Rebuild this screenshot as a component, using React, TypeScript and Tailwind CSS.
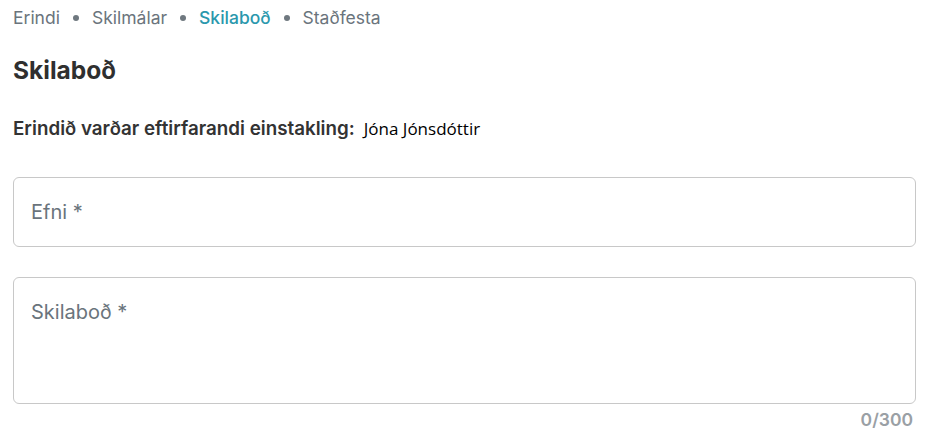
import React from "react";

const Dot = () => <span className="inline-block w-[6px] h-[6px] rounded-full bg-[#6f787f]" />;

export default function App() {
  return (
    <div className="w-[926px] h-[438px] bg-white pl-[13px] pr-[10px] pt-[6px] text-[#333]" style={{ fontFamily: "Inter, 'Noto Sans', sans-serif" }}>
      <nav className="flex items-center gap-[13px] text-[17.5px] leading-[24px] text-[#6a747c]">
        <span>Erindi</span>
        <Dot />
        <span>Skilmálar</span>
        <Dot />
        <span className="text-[#2a98ad] font-medium">Skilaboð</span>
        <Dot />
        <span>Staðfesta</span>
      </nav>
      <h1 className="mt-[26px] text-[24.5px] leading-[28px] font-bold text-[#2f2f2f]">Skilaboð</h1>
      <div className="mt-[33px] flex items-baseline gap-[9px] leading-[24px]">
        <span className="text-[18.8px] font-semibold text-[#333]">Erindið varðar eftirfarandi einstakling:</span>
        <span className="text-[17px] text-black" style={{ fontFamily: "'Open Sans', sans-serif" }}>Jóna Jónsdóttir</span>
      </div>
      <div className="mt-[36px] h-[70px] rounded-[6px] border border-[#c8c8c8] flex items-center px-[17px]">
        <span className="text-[20px] text-[#6a747c]">Efni *</span>
      </div>
      <div className="mt-[30px] h-[127px] rounded-[6px] border border-[#c8c8c8] px-[17px] pt-[20px]">
        <span className="text-[20px] leading-[28px] text-[#6a747c]">Skilaboð *</span>
      </div>
      <div className="mt-[5px] text-right pr-[3px] text-[17.5px] leading-[22px] font-semibold text-[#9aa0a5]">0/300</div>
    </div>
  );
}
